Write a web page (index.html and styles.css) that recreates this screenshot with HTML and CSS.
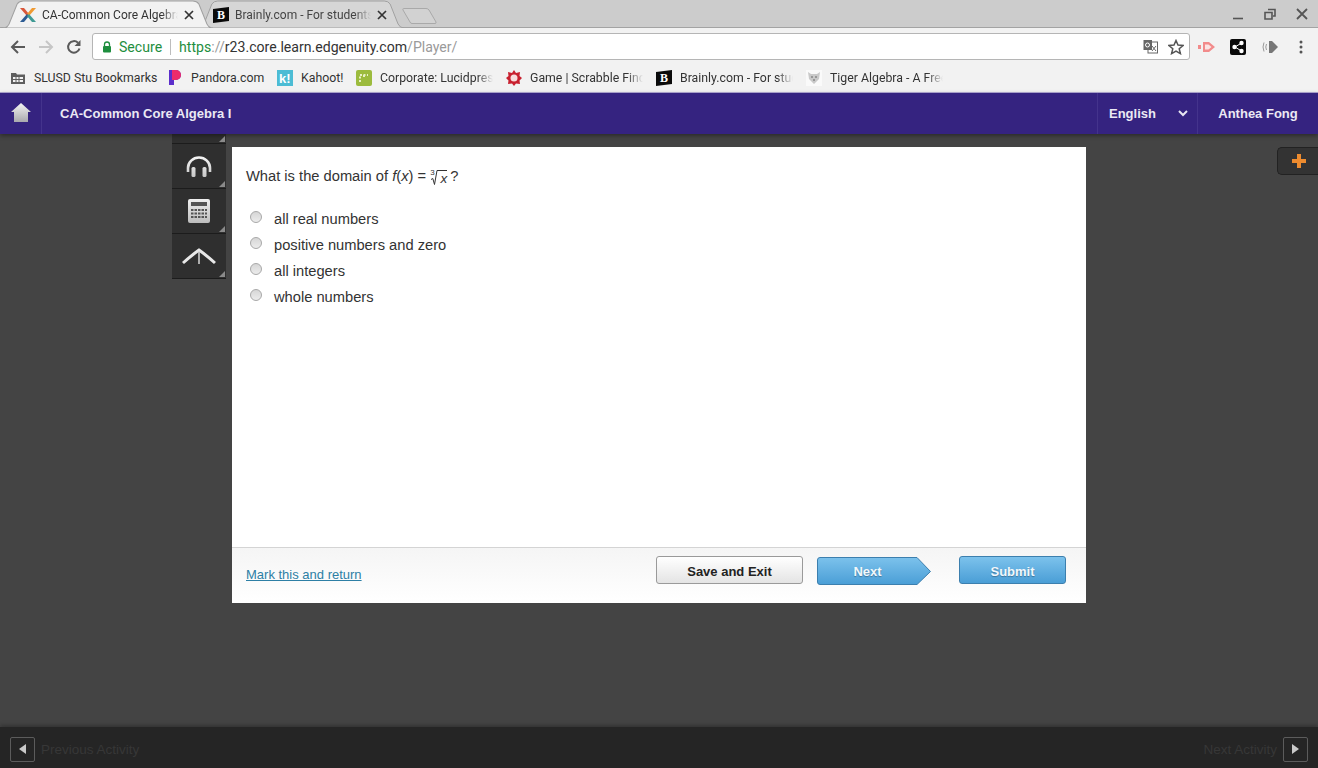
FILE: index.html
```html
<!DOCTYPE html>
<html lang="en">
<head>
    <meta charset="UTF-8">
    <title>CA-Common Core Algebra I</title>
    <link rel="stylesheet" href="styles.css">
</head>
<body>
<div class="tabstrip">
    <div class="tab tab-active">
        <svg class="tab-shape" viewBox="0 0 210 28" preserveAspectRatio="none"><path d="M0 28 L2 28 Q6 28 8 24 L16 4 Q18 1 22 1 L190 1 Q194 1 196 4 L204 24 Q206 28 210 28 Z" fill="#f2f2f2" stroke="#a0a0a0"/></svg>
        <svg class="favicon" viewBox="0 0 16 16"><path d="M0 1 L4 1 L9 7 L7 9 Z" fill="#d9573a"/><path d="M16 1 L12 1 L7 7 L9 9 Z" fill="#ef9a32"/><path d="M0 15 L4 15 L9 9 L7 7 Z" fill="#2c5c94"/><path d="M16 15 L12 15 L7 9 L9 7 Z" fill="#3f9a94"/></svg>
        <span class="tab-title">CA-Common Core Algebra I</span>
        <svg class="tab-close" width="10" height="10" viewBox="0 0 10 10"><path d="M1 1 L9 9 M9 1 L1 9" stroke="#333" stroke-width="1.700"/></svg>
    </div>
    <div class="tab tab-back">
        <svg class="tab-shape" viewBox="0 0 210 28" preserveAspectRatio="none"><path d="M0 28 L2 28 Q6 28 8 24 L16 4 Q18 1 22 1 L190 1 Q194 1 196 4 L204 24 Q206 28 210 28 Z" fill="#d6d6d6" stroke="#a0a0a0"/></svg>
        <svg class="favicon" viewBox="0 0 16 16"><path d="M0 2 L16 0 L16 14 L0 16 Z" fill="#0b0b0b"/><text x="8" y="12" class="fav-b">B</text></svg>
        <span class="tab-title">Brainly.com - For students. By students.</span>
        <svg class="tab-close" width="10" height="10" viewBox="0 0 10 10"><path d="M1 1 L9 9 M9 1 L1 9" stroke="#333" stroke-width="1.700"/></svg>
    </div>
    <svg class="newtab" width="36" height="18" viewBox="0 0 36 18"><path d="M1.500 1.500 L24 1.500 Q26 1.500 27 3 L34 15 Q34.500 16.500 33 16.500 L10 16.500 Q8.500 16.500 8 15 L1 3 Q0.500 1.500 1.500 1.500 Z" fill="#d2d2d2" stroke="#a9a9a9"/></svg>
    <div class="window-controls">
        <svg width="14" height="14" viewBox="0 0 14 14"><path d="M2 11.500 H12" stroke="#555" stroke-width="1.600"/></svg>
        <svg width="14" height="14" viewBox="0 0 14 14"><path d="M5 2.500 H12 V9 H10 M2 5.500 H9 V12 H2 Z" fill="none" stroke="#555" stroke-width="1.600"/></svg>
        <svg width="14" height="14" viewBox="0 0 14 14"><path d="M2 2 L12 12 M12 2 L2 12" stroke="#555" stroke-width="1.800"/></svg>
    </div>
</div>

<div class="toolbar">
    <svg class="nav-icon" viewBox="0 0 16 16"><path d="M15 8 H2 M8 2 L2 8 L8 14" fill="none" stroke="#5a5a5a" stroke-width="2"/></svg>
    <svg class="nav-icon" viewBox="0 0 16 16"><path d="M1 8 H14 M8 2 L14 8 L8 14" fill="none" stroke="#c6c6c6" stroke-width="2"/></svg>
    <svg class="nav-icon" viewBox="0 0 16 16"><path d="M13.500 9.500 A5.800 5.800 0 1 1 12 3.800" fill="none" stroke="#5a5a5a" stroke-width="2"/><path d="M14.500 1 V7 H8.500 Z" fill="#5a5a5a"/></svg>
    <div class="omnibox">
        <svg class="lock" width="10" height="12" viewBox="0 0 10 12"><path d="M2.500 5 V3.500 A2.500 2.500 0 0 1 7.500 3.500 V5" fill="none" stroke="#1e8e3e" stroke-width="1.300"/><rect x="1" y="5" width="8" height="6.500" rx="1" fill="#1e8e3e"/></svg>
        <span class="secure">Secure</span>
        <span class="omni-sep"></span>
        <span class="url"><span class="url-https">https</span><span class="url-dim">://</span>r23.core.learn.edgenuity.com<span class="url-dim">/Player/</span></span>
        <svg class="translate" width="15" height="15" viewBox="0 0 15 15"><rect x="5" y="3" width="9.500" height="11" fill="#fff" stroke="#666"/><rect x="0.500" y="1" width="8.500" height="10" fill="#666"/><circle cx="4.500" cy="6" r="2" fill="none" stroke="#fff"/><path d="M9 7 L13 12 M13 7 L9 12" stroke="#666"/></svg>
        <svg class="star" width="16" height="16" viewBox="0 0 16 16"><path d="M8 1.500 L10 6 L15 6.500 L11.200 9.700 L12.400 14.600 L8 12 L3.600 14.600 L4.800 9.700 L1 6.500 L6 6 Z" fill="none" stroke="#555" stroke-width="1.500"/></svg>
    </div>
    <div class="extensions">
        <svg width="18" height="14" viewBox="0 0 18 14"><path d="M0 5 H3 V9 H0 Z M5 2 H11 L17 7 L11 12 H5 Z" fill="#f28b8b"/><path d="M7 4.500 H10.500 L13.500 7 L10.500 9.500 H7 Z" fill="#fbe4e4"/></svg>
        <svg width="16" height="16" viewBox="0 0 16 16"><rect width="16" height="16" rx="2" fill="#0a0a0a"/><path d="M11.500 4 L5 8 L11.500 12" fill="none" stroke="#fff"/><circle cx="11.500" cy="4" r="2.200" fill="#fff"/><circle cx="4.500" cy="8" r="2.200" fill="#fff"/><circle cx="11.500" cy="12" r="2.200" fill="#fff"/></svg>
        <svg class="ext-sound" width="17" height="14" viewBox="0 0 17 14"><path d="M7 1 H10 L16 7 L10 13 H7 Z" fill="#777"/><path d="M4.500 4 Q3 7 4.500 10 M2 2.500 Q0 7 2 11.500" fill="none" stroke="#999"/></svg>
        <svg class="ext-menu" width="4" height="14" viewBox="0 0 4 14"><circle cx="2" cy="2" r="1.500" fill="#555"/><circle cx="2" cy="7" r="1.500" fill="#555"/><circle cx="2" cy="12" r="1.500" fill="#555"/></svg>
    </div>
</div>

<div class="bookmarks">
    <div class="bookmark bm-folder">
        <svg width="14" height="12" viewBox="0 0 14 12"><path d="M0 1 H5 L6 2.500 H14 V12 H0 Z" fill="#5f5f5f"/><rect x="2" y="5" width="10" height="5" fill="#f2f2f2"/><path d="M5 5 V10 M8 5 V10 M2 7.500 H12" stroke="#5f5f5f"/></svg>
        <span>SLUSD Stu Bookmarks</span>
    </div>
    <div class="bookmark bm-pandora">
        <svg width="14" height="15" viewBox="0 0 14 15"><path d="M0 0 H7 A5 5 0 0 1 7 10 H5 V15 H0 Z" fill="#5b2ecb"/><path d="M3 0 H7 A5 5 0 0 1 7 10 H3 Z" fill="#ec2b6b"/></svg>
        <span>Pandora.com</span>
    </div>
    <div class="bookmark bm-kahoot">
        <svg width="16" height="16" viewBox="0 0 16 16"><rect width="16" height="16" fill="#4cbcd4"/><text x="2" y="13" class="fav-k">k!</text></svg>
        <span>Kahoot!</span>
    </div>
    <div class="bookmark bm-lucid">
        <svg width="16" height="16" viewBox="0 0 16 16"><rect width="16" height="16" rx="2" fill="#9cbb3d"/><path d="M4 12 V5 H12 M8 5 V8" fill="none" stroke="#e7f0c4" stroke-width="2" stroke-dasharray="2 1.500"/></svg>
        <span class="fade">Corporate: Lucidpress</span>
    </div>
    <div class="bookmark bm-scrabble">
        <svg width="16" height="16" viewBox="0 0 16 16"><path d="M8 0 L10 3 L14 2 L13.500 6 L16 8 L13.500 10.500 L14 14 L10 13.500 L8 16 L6 13.500 L2 14 L2.500 10.500 L0 8 L2.500 6 L2 2 L6 3 Z" fill="#c8202f"/><circle cx="8" cy="8" r="3.500" fill="#f7dcdc"/></svg>
        <span class="fade">Game | Scrabble Finder</span>
    </div>
    <div class="bookmark bm-brainly">
        <svg width="16" height="16" viewBox="0 0 16 16"><path d="M0 2 L16 0 L16 14 L0 16 Z" fill="#0b0b0b"/><text x="8" y="12" class="fav-b">B</text></svg>
        <span class="fade">Brainly.com - For students</span>
    </div>
    <div class="bookmark bm-tiger">
        <svg width="16" height="16" viewBox="0 0 16 16"><rect width="16" height="16" fill="#fafafa"/><path d="M2 2 L5 4 H11 L14 2 L13 9 L8 14 L3 9 Z" fill="#c9c9c9"/><path d="M5 7 H7 M9 7 H11 M8 9 V11" stroke="#666"/></svg>
        <span class="fade">Tiger Algebra - A Free</span>
    </div>
</div>

<header class="app-header">
    <a class="home-btn">
        <svg width="20" height="19" viewBox="0 0 20 19"><defs><linearGradient id="homeFill" x1="0" y1="0" x2="0" y2="1"><stop offset="0" stop-color="#f4f4f4"/><stop offset="1" stop-color="#a9a9ad"/></linearGradient></defs><path d="M10 0 L20 9 H17 V19 H3 V9 H0 Z" fill="url(#homeFill)"/></svg>
    </a>
    <div class="course-title">CA-Common Core Algebra I</div>
    <div class="lang-menu">
        <span>English</span>
        <svg width="10" height="7" viewBox="0 0 10 7"><path d="M1 1 L5 5 L9 1" fill="none" stroke="#e8e6f2" stroke-width="2"/></svg>
    </div>
    <div class="user-name">Anthea Fong</div>
</header>

<main class="stage">
    <div class="tools">
        <div class="tool tool-stub"></div>
        <div class="tool">
            <svg width="26" height="21" viewBox="0 0 26 21"><defs><linearGradient id="phoneFill" gradientUnits="userSpaceOnUse" x1="0" y1="0" x2="0" y2="21"><stop offset="0" stop-color="#f6f6f6"/><stop offset="1" stop-color="#c8c8c8"/></linearGradient></defs><path d="M2 16 V12 A11 10.500 0 0 1 24 12 V16" fill="none" stroke="url(#phoneFill)" stroke-width="2.600"/><rect x="5.500" y="11" width="4" height="10" rx="1.500" fill="url(#phoneFill)"/><rect x="16.500" y="11" width="4" height="10" rx="1.500" fill="url(#phoneFill)"/></svg>
        </div>
        <div class="tool">
            <svg width="22" height="24" viewBox="0 0 22 24"><defs><linearGradient id="calcFill" x1="0" y1="0" x2="0" y2="1"><stop offset="0" stop-color="#f0f0f0"/><stop offset="1" stop-color="#bcbcbc"/></linearGradient></defs><rect width="22" height="24" rx="2" fill="url(#calcFill)"/><rect x="3" y="3" width="16" height="4" fill="#555"/><path d="M3 11 H19 M3 14.500 H19 M3 18 H19" stroke="#555" stroke-width="2" stroke-dasharray="2.500 1"/></svg>
        </div>
        <div class="tool">
            <svg width="34" height="20" viewBox="0 0 34 20"><path d="M1 17 Q10 9 17 4 Q24 9 33 17" fill="none" stroke="#e8e8e8" stroke-width="3"/><path d="M17 5 V18" stroke="#d8d8d8" stroke-width="1.500"/></svg>
        </div>
    </div>

    <section class="card">
        <div class="question">
            <p class="prompt">What is the domain of <i>f</i>(<i>x</i>) = <span class="radical"><svg class="root-sign" width="18" height="17" viewBox="0 0 18 17"><path d="M2 10.500 L3.800 9.500 L5.500 15.500 L8 1.500 H18" fill="none" stroke="#333" stroke-width="1"/></svg><sup>3</sup><i>x</i></span>?</p>
            <label class="choice"><span class="radio"></span>all real numbers</label>
            <label class="choice"><span class="radio"></span>positive numbers and zero</label>
            <label class="choice"><span class="radio"></span>all integers</label>
            <label class="choice"><span class="radio"></span>whole numbers</label>
        </div>
        <div class="card-foot">
            <a class="mark-link">Mark this and return</a>
            <button class="btn btn-save">Save and Exit</button>
            <div class="next-wrap">
                <svg width="114" height="29" viewBox="0 0 114 29"><defs><linearGradient id="nextFill" x1="0" y1="0" x2="0" y2="1"><stop offset="0" stop-color="#7cc2ec"/><stop offset="1" stop-color="#4a9ed6"/></linearGradient></defs><path d="M3 .5 H100 L113.500 14.500 L100 27.500 H3 Q.5 27.500 .5 25 V3 Q.5 .5 3 .5 Z" fill="url(#nextFill)" stroke="#3c7fae"/></svg>
                <span class="next-label">Next</span>
            </div>
            <button class="btn btn-submit">Submit</button>
        </div>
    </section>

    <button class="plus-tab">
        <svg width="14" height="14" viewBox="0 0 14 14"><path d="M5 0 H9 V5 H14 V9 H9 V14 H5 V9 H0 V5 H5 Z" fill="#ed8b2f"/></svg>
    </button>
</main>

<footer class="activity-bar">
    <div class="act-nav">
        <span class="act-btn"><svg width="7" height="10" viewBox="0 0 7 10"><path d="M7 0 V10 L0 5 Z" fill="#c9c9c9"/></svg></span>
        <span>Previous Activity</span>
    </div>
    <div class="act-nav">
        <span>Next Activity</span>
        <span class="act-btn"><svg width="7" height="10" viewBox="0 0 7 10"><path d="M0 0 V10 L7 5 Z" fill="#c9c9c9"/></svg></span>
    </div>
</footer>
</body>
</html>
```

FILE: styles.css
```css
html, body {
    margin: 0;
    padding: 0;
    height: 100%;
    overflow: hidden;
}
body {
    display: flex;
    flex-direction: column;
    height: 768px;
    font-family: "Liberation Sans", Arial, sans-serif;
    background-color: #444444;
}

/* browser chrome */
.tabstrip {
    display: flex;
    align-items: flex-end;
    height: 28px;
    padding-left: 1px;
    background-color: #cccccc;
    border-bottom: 1px solid #a3a3a3;
    box-sizing: border-box;
    flex: none;
}
.tab {
    position: relative;
    display: flex;
    align-items: center;
    height: 28px;
    margin-bottom: -1px;
    padding-top: 2px;
    box-sizing: border-box;
    font-family: Roboto, sans-serif;
    font-size: 12px;
    color: #333333;
}
.tab-active {
    width: 212px;
    padding-left: 19px;
    z-index: 1;
}
.tab-back {
    width: 208px;
    margin-left: -17px;
    padding-left: 17px;
    color: #444444;
}
.tab-shape {
    position: absolute;
    left: 0;
    top: 0;
    width: 100%;
    height: 100%;
}
.favicon {
    position: relative;
    width: 16px;
    height: 16px;
    margin-right: 6px;
    flex: none;
}
.tab-title {
    position: relative;
    width: 136px;
    overflow: hidden;
    white-space: nowrap;
    -webkit-mask-image: linear-gradient(to right, #000 88%, transparent);
}
.tab-close {
    position: relative;
    margin-left: 6px;
    flex: none;
}
.fav-b {
    font-family: "Liberation Serif", serif;
    font-weight: bold;
    font-size: 12px;
    fill: #ffffff;
    text-anchor: middle;
}
.fav-k {
    font-family: "Liberation Sans", sans-serif;
    font-weight: bold;
    font-size: 13px;
    fill: #ffffff;
}
.newtab {
    margin: 0 0 2px -2px;
}
.window-controls {
    display: flex;
    gap: 18px;
    margin-left: auto;
    align-self: flex-start;
    padding: 7px 9px 0 0;
}

.toolbar {
    display: flex;
    align-items: center;
    height: 37px;
    padding-left: 10px;
    background-color: #f2f2f2;
    flex: none;
    box-sizing: border-box;
}
.nav-icon {
    width: 16px;
    height: 16px;
    margin-right: 12px;
    flex: none;
}
.omnibox {
    display: flex;
    align-items: center;
    width: 1098px;
    height: 27px;
    margin-left: -2px;
    padding-left: 9px;
    box-sizing: border-box;
    background-color: #ffffff;
    border: 1px solid #b5b5b5;
    border-radius: 3px;
    font-family: Roboto, sans-serif;
    font-size: 14.1px;
    flex: none;
}
.secure {
    margin-left: 7px;
    color: #1e8e3e;
}
.omni-sep {
    width: 1px;
    height: 16px;
    margin: 0 8px;
    background-color: #bdbdbd;
}
.url {
    color: #333333;
    white-space: nowrap;
}
.url-https {
    color: #1e8e3e;
}
.url-dim {
    color: #9a9a9a;
}
.translate {
    margin-left: auto;
}
.star {
    margin: 0 5px 0 10px;
}
.extensions {
    display: flex;
    align-items: center;
    gap: 14px;
    margin-left: 8px;
}
.ext-sound {
    margin-left: 2px;
}
.ext-menu {
    margin-left: 6px;
}

.bookmarks {
    display: flex;
    align-items: center;
    height: 27px;
    padding: 0 0 2px 11px;
    background-color: #f2f2f2;
    font-family: Roboto, sans-serif;
    font-size: 12.3px;
    color: #333333;
    white-space: nowrap;
    flex: none;
    box-sizing: border-box;
}
.bookmark {
    display: flex;
    align-items: center;
    gap: 8px;
    flex: none;
}
.bm-folder { width: 158px; gap: 9px; }
.bm-pandora { width: 108px; }
.bm-kahoot { width: 79px; }
.bm-lucid { width: 150px; }
.bm-scrabble { width: 150px; }
.bm-brainly { width: 150px; }
.bm-tiger { width: 140px; }
.bookmark .fade {
    width: 113px;
    overflow: hidden;
    -webkit-mask-image: linear-gradient(to right, #000 86%, transparent);
}

/* app header */
.app-header {
    display: flex;
    align-items: center;
    height: 42px;
    background-color: #352380;
    border-top: 1px solid #a79fc8;
    box-sizing: border-box;
    color: #ebe9f4;
    font-size: 13px;
    font-weight: bold;
    flex: none;
    box-shadow: 0 2px 4px rgba(0, 0, 0, 0.35);
    position: relative;
}
.home-btn {
    display: flex;
    align-items: center;
    justify-content: center;
    width: 42px;
    height: 100%;
    padding-bottom: 2px;
    border-right: 1px solid #44338c;
    box-sizing: border-box;
}
.course-title {
    margin-left: 18px;
    padding-bottom: 1px;
}
.lang-menu {
    display: flex;
    align-items: center;
    justify-content: space-between;
    width: 101px;
    height: 100%;
    margin-left: auto;
    padding: 0 9px 1px 11px;
    box-sizing: border-box;
    border-left: 1px solid #44338c;
    border-right: 1px solid #44338c;
}
.user-name {
    width: 120px;
    padding-bottom: 1px;
    text-align: center;
}

/* player area */
.stage {
    display: flex;
    align-items: flex-start;
    flex: 1;
    padding: 13px 0 0 172px;
    min-height: 0;
}
.tools {
    display: flex;
    flex-direction: column;
    width: 54px;
    margin-top: -13px;
    margin-right: 6px;
    background-color: #2f2f2f;
    flex: none;
}
.tool {
    position: relative;
    display: flex;
    align-items: center;
    justify-content: center;
    height: 45px;
    border-bottom: 1px solid #1c1c1c;
    box-sizing: border-box;
}
.tool::after {
    content: "";
    position: absolute;
    right: 1px;
    bottom: 1px;
    border-style: solid;
    border-width: 0 0 6px 6px;
    border-color: transparent transparent #8a8a8a transparent;
}
.tool-stub {
    height: 10px;
}

.card {
    display: flex;
    flex-direction: column;
    width: 854px;
    height: 456px;
    background-color: #ffffff;
    flex: none;
}
.question {
    flex: 1;
    padding: 20px 14px 0;
    font-size: 14.7px;
    color: #333333;
}
.prompt {
    margin: 0 0 20px;
    line-height: 18px;
}
.radical {
    position: relative;
    display: inline-block;
    width: 21px;
    height: 16px;
    margin-left: -1px;
    line-height: 18px;
    text-align: right;
    vertical-align: -2px;
    font-size: 13.5px;
}
.root-sign {
    position: absolute;
    left: 0;
    top: -1px;
}
.radical sup {
    position: absolute;
    left: 1px;
    top: -1px;
    font-size: 8px;
    line-height: 8px;
}
.radical i {
    position: relative;
    padding-right: 3px;
}
.choice {
    display: flex;
    align-items: center;
    height: 26px;
}
.radio {
    width: 10px;
    height: 10px;
    margin: -5px 12px 0 4px;
    border: 1px solid #a8a8a8;
    border-radius: 50%;
    background: linear-gradient(to bottom, #d6d6d6, #ececec);
    flex: none;
}
.card-foot {
    display: flex;
    align-items: center;
    height: 56px;
    padding: 0 20px 9px 14px;
    box-sizing: border-box;
    background: linear-gradient(to bottom, #f5f5f5, #ffffff);
    border-top: 1px solid #d4d4d4;
}
.mark-link {
    margin-top: 6px;
    font-size: 13px;
    color: #2d7fa5;
    text-decoration: underline;
}
.btn {
    height: 28px;
    margin-top: -2px;
    border-radius: 3px;
    font-family: "Liberation Sans", Arial, sans-serif;
    font-size: 13px;
    font-weight: bold;
    cursor: pointer;
    padding: 2px 0 0;
}
.btn-save {
    width: 147px;
    margin-left: auto;
    color: #222222;
    background: linear-gradient(to bottom, #ffffff, #e4e4e4);
    border: 1px solid #9a9a9a;
}
.next-wrap {
    position: relative;
    width: 114px;
    height: 29px;
    margin: 0 28px 0 14px;
}
.next-label {
    position: absolute;
    left: 0;
    top: 0;
    width: 101px;
    line-height: 29px;
    text-align: center;
    font-size: 13px;
    font-weight: bold;
    color: #f2f8fc;
    text-shadow: 0 1px 1px rgba(0, 0, 0, 0.3);
}
.btn-submit {
    width: 107px;
    color: #f2f8fc;
    background: linear-gradient(to bottom, #7cc2ec, #4a9ed6);
    border: 1px solid #3c7fae;
    text-shadow: 0 1px 1px rgba(0, 0, 0, 0.3);
}
.plus-tab {
    display: flex;
    align-items: center;
    justify-content: center;
    width: 41px;
    height: 28px;
    margin-left: auto;
    padding: 0 0 0 1px;
    background-color: #333333;
    border: 1px solid #222222;
    border-right: none;
    border-radius: 5px 0 0 5px;
}

/* bottom bar */
.activity-bar {
    display: flex;
    align-items: center;
    justify-content: space-between;
    height: 41px;
    padding: 3px 10px 0;
    box-sizing: border-box;
    background-color: #252525;
    box-shadow: 0 -2px 4px rgba(0, 0, 0, 0.25);
    color: #373737;
    font-size: 13.500px;
    flex: none;
}
.act-nav {
    display: flex;
    align-items: center;
    gap: 6px;
}
.act-btn {
    display: flex;
    align-items: center;
    justify-content: center;
    width: 25px;
    height: 25px;
    border: 1px solid #5c5c5c;
    border-radius: 2px;
    box-sizing: border-box;
}
```
